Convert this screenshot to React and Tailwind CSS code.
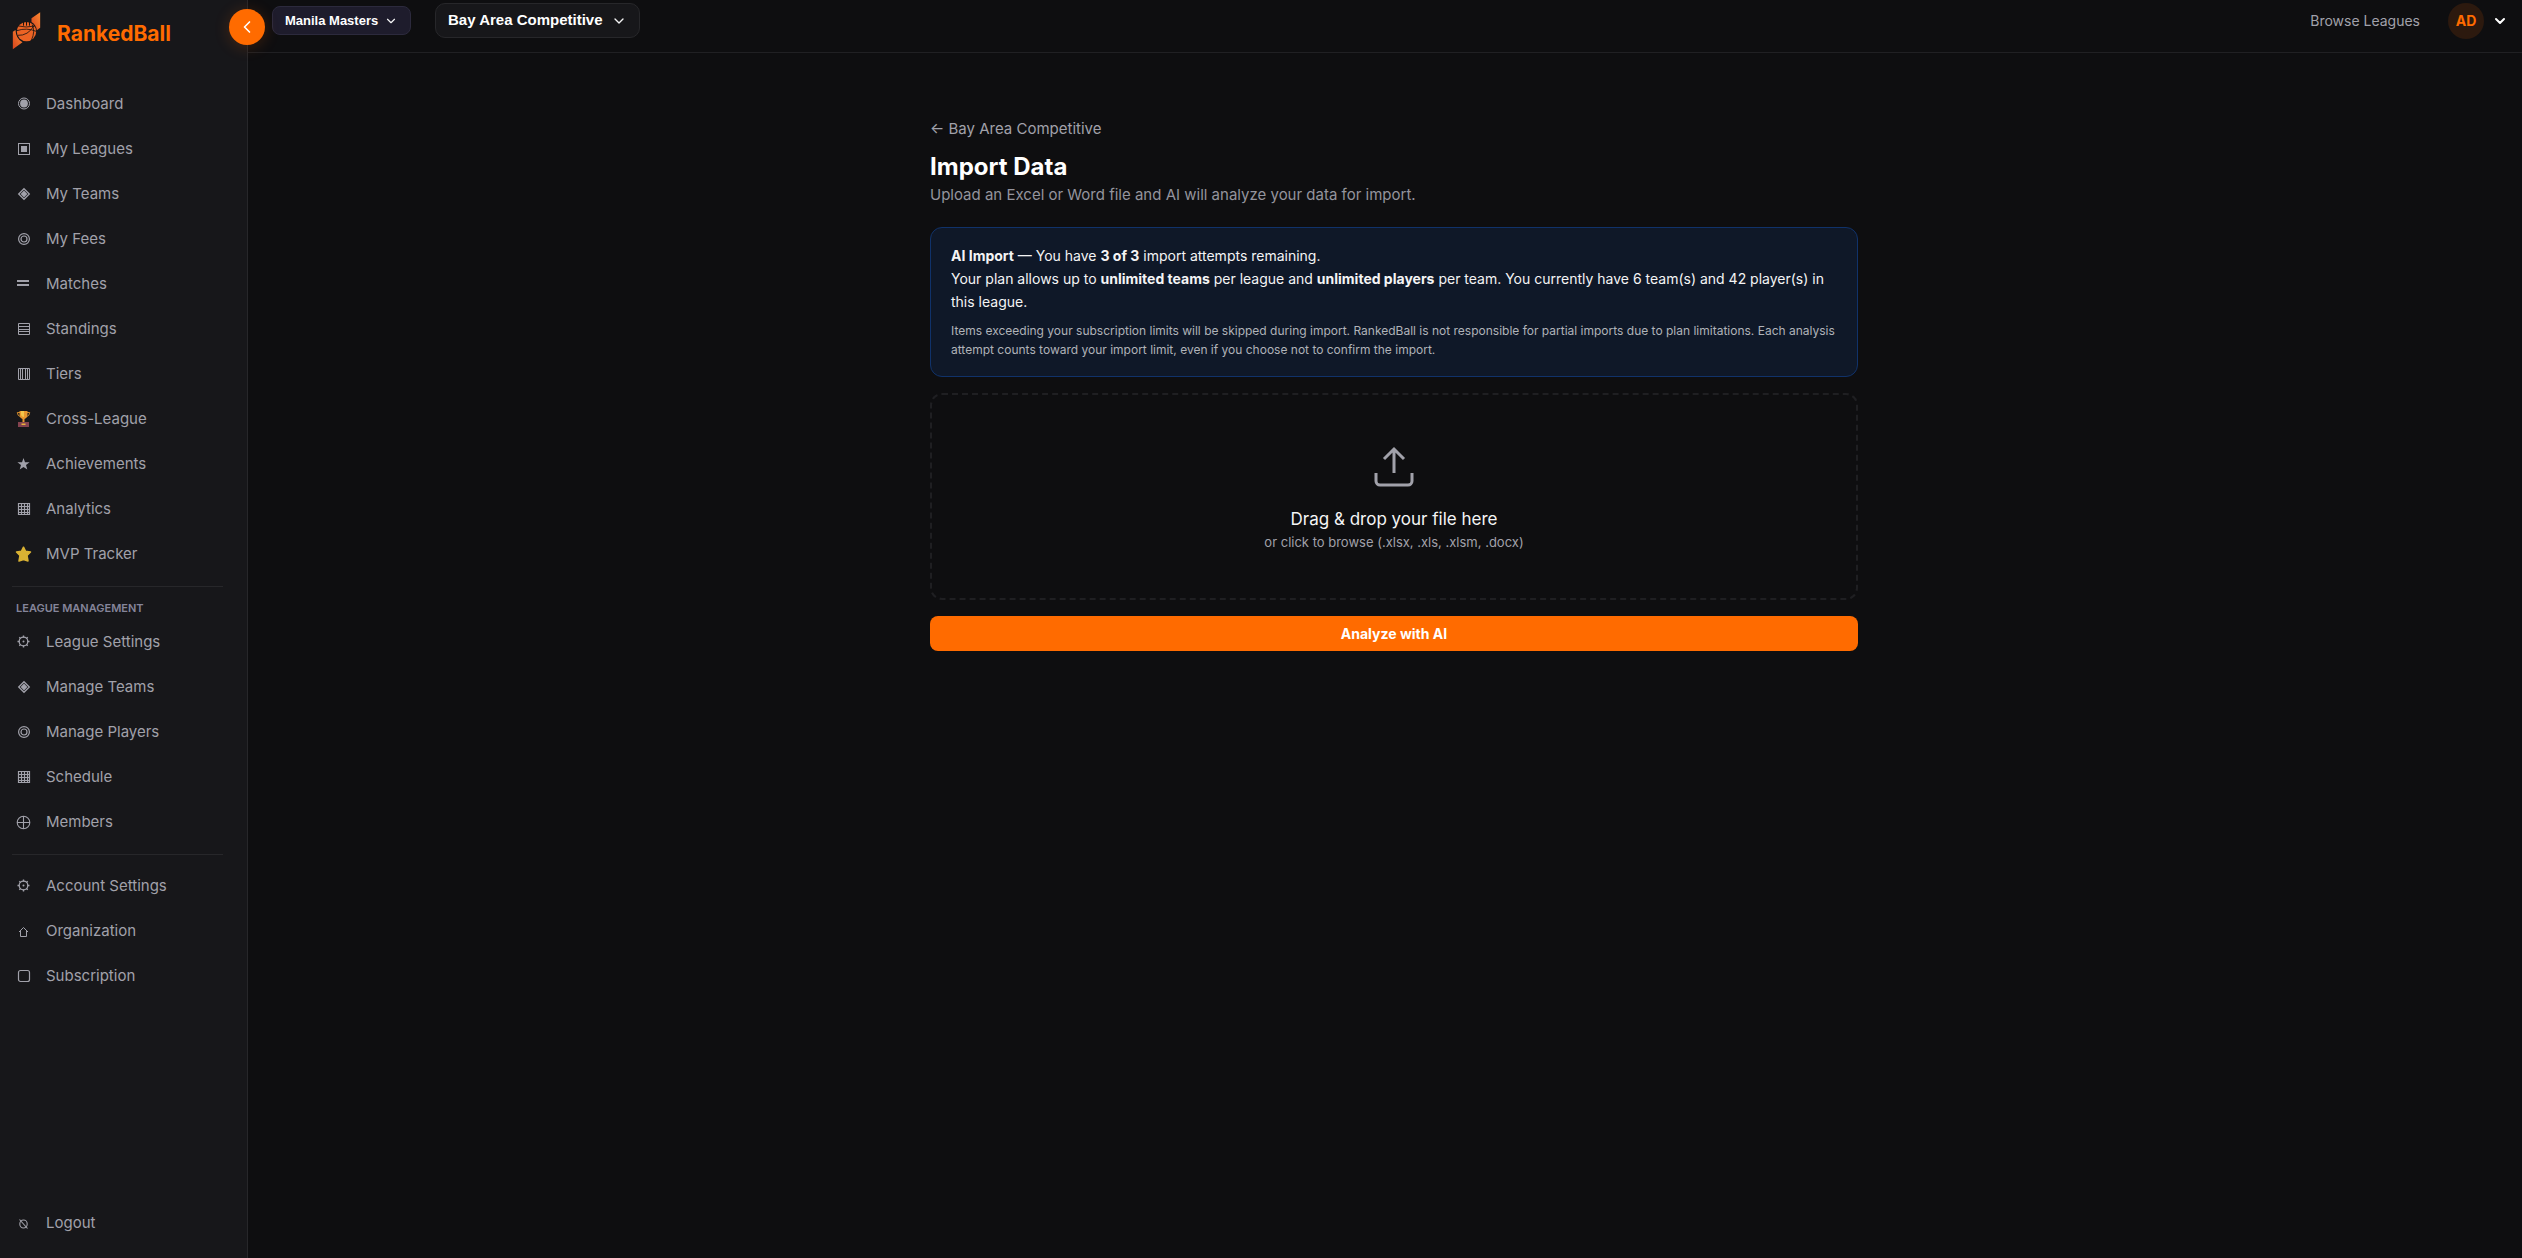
import { useState } from "react";
import { ChevronDown, ChevronLeft } from "lucide-react";
import clsx from "clsx";

// Sidebar glyphs, all drawn on a 16px wide grid
const glyphs = {
  fisheye: (
    <>
      <circle cx="8" cy="7.5" r="5.5" fill="none" stroke="currentColor" />
      <circle cx="8" cy="7.5" r="3.9" />
    </>
  ),
  square: (
    <>
      <rect x="2.5" y="2.5" width="11" height="11" fill="none" stroke="currentColor" />
      <rect x="5" y="5" width="6" height="6" />
    </>
  ),
  diamond: (
    <>
      <path d="M8 2.7 13.3 8 8 13.3 2.7 8Z" fill="none" stroke="currentColor" strokeWidth="1.3" />
      <path d="M8 4.6 11.4 8 8 11.4 4.6 8Z" />
    </>
  ),
  rings: (
    <g fill="none" stroke="currentColor" strokeWidth="1.2">
      <circle cx="8" cy="8" r="5.4" />
      <circle cx="8" cy="8" r="3" />
    </g>
  ),
  equals: <path d="M1 4h12v2H1zM1 8h12v2H1z" />,
  rows: (
    <path
      d="M2.5 2.5h11v11h-11zM2.5 5.5h11M2.5 8.5h11M2.5 10.5h11"
      fill="none"
      stroke="currentColor"
    />
  ),
  columns: (
    <path
      d="M2.5 2.5h11v11h-11zM4.5 2.5v11M6.5 2.5v11M9.5 2.5v11M11.5 2.5v11"
      fill="none"
      stroke="currentColor"
    />
  ),
  grid: (
    <path
      d="M2.5 2.5h11v11h-11zM5.5 2.5v11M8.5 2.5v11M11.5 2.5v11M2.5 5.5h11M2.5 8.5h11M2.5 11.5h11"
      fill="none"
      stroke="currentColor"
      strokeWidth="1.2"
    />
  ),
  trophy: (
    <>
      <path d="M4 1.5H1.3Q1.3 5 5 6M11 1.5h2.7Q13.7 5 10 6" fill="none" stroke="#d08a2c" />
      <path d="M3.5 0h8v3q0 4-3 5v3h-2V8q-3-1-3-5z" fill="#e8962e" />
      <path d="M5 0h3v6Q5 5.500 5 3z" fill="#f3c64b" />
      <path d="M2 11h11v5H2z" fill="#84434f" />
      <path d="M5.5 12.500h4v1.500h-4z" fill="#e8b23c" />
    </>
  ),
  star: <path d="M7.5 2 9 6.3h4.600L10 9.100 11.300 13.500 7.500 10.900 3.700 13.500 5 9.100 1.400 6.300H6z" />,
  goldStar: (
    <path
      d="M7.5 1.2 9.600 5.300 14.500 6 11 9.500 12 15 7.500 13.500 3 15 4 9.500 0.500 6 5.400 5.300z"
      fill="#d9b233"
      stroke="#d9b233"
      strokeWidth="1.5"
      strokeLinejoin="round"
    />
  ),
  gear: (
    <>
      <circle cx="7.5" cy="7.5" r="4.300" fill="none" stroke="currentColor" strokeWidth="1.2" />
      <path
        d="M7.5 1.5v2M7.5 11.500v2M1.500 7.500h2M11.500 7.500h2M3.300 3.300l1.200 1.200M10.500 10.500l1.200 1.200M11.700 3.300l-1.200 1.200M4.500 10.500l-1.200 1.200"
        fill="none"
        stroke="currentColor"
        strokeWidth="1.4"
      />
      <circle cx="7.5" cy="7.5" r="1" />
    </>
  ),
  crossCircle: (
    <g fill="none" stroke="currentColor" strokeWidth="1.1">
      <circle cx="7.5" cy="8.5" r="6.3" />
      <path d="M7.5 2v13M1 8.500h13" />
    </g>
  ),
  house: <path d="M3 9 7.5 4.500 12 9M4.500 8v5.500h6V8" fill="none" stroke="currentColor" />,
  roundedSquare: (
    <rect x="2.5" y="2.5" width="11" height="11" rx="2" fill="none" stroke="currentColor" strokeWidth="1.2" />
  ),
  slashCircle: (
    <g fill="none" stroke="currentColor" strokeWidth="1.1">
      <ellipse cx="7.5" cy="9" rx="3.7" ry="4" />
      <path d="M3.5 4.500 11.500 13.500" />
    </g>
  ),
};

const mainLinks = [
  { label: "Dashboard", icon: "fisheye" },
  { label: "My Leagues", icon: "square" },
  { label: "My Teams", icon: "diamond" },
  { label: "My Fees", icon: "rings" },
  { label: "Matches", icon: "equals" },
  { label: "Standings", icon: "rows" },
  { label: "Tiers", icon: "columns" },
  { label: "Cross-League", icon: "trophy" },
  { label: "Achievements", icon: "star" },
  { label: "Analytics", icon: "grid" },
  { label: "MVP Tracker", icon: "goldStar" },
];

const leagueLinks = [
  { label: "League Settings", icon: "gear" },
  { label: "Manage Teams", icon: "diamond" },
  { label: "Manage Players", icon: "rings" },
  { label: "Schedule", icon: "grid" },
  { label: "Members", icon: "crossCircle" },
];

const accountLinks = [
  { label: "Account Settings", icon: "gear" },
  { label: "Organization", icon: "house" },
  { label: "Subscription", icon: "roundedSquare" },
];

function Logo() {
  return (
    <svg viewBox="36 38 86 114" className="w-[29px] h-[38px] shrink-0" aria-hidden="true">
      <defs>
        <linearGradient id="flame" x1="1" y1="0" x2="0" y2="1">
          <stop offset="0" stopColor="#f98a33" />
          <stop offset="1" stopColor="#d8431c" />
        </linearGradient>
      </defs>
      <path d="M94 57 120 39V85L110 93Q108 76 94 68Z" fill="url(#flame)" />
      <path d="M38 97 46 92Q47 118 67 129L38 150Z" fill="url(#flame)" />
      <circle cx="79" cy="97" r="29" fill="#ec6324" />
      <g fill="none" stroke="#1c1412" strokeWidth="2.5">
        <path d="M50 94Q80 84 108 96M52 108Q84 110 102 78M96 76Q106 96 94 122" />
        <path d="M55 80Q76 86 104 80" />
        <path d="M70 66v13M79 66v13M88 66v13" strokeWidth="3" />
      </g>
    </svg>
  );
}

function NavItem({ label, icon }) {
  return (
    <li>
      <a href="#" className="flex items-center gap-[14px] h-[45px] pl-1 rounded-lg hover:bg-white/5">
        <svg viewBox="0 1 16 16" className="w-4 h-4 shrink-0 overflow-visible" fill="currentColor" aria-hidden="true">
          {glyphs[icon]}
        </svg>
        {label}
      </a>
    </li>
  );
}

function NavGroup({ links }) {
  return (
    <ul>
      {links.map((link) => (
        <NavItem key={link.label} {...link} />
      ))}
    </ul>
  );
}

function Sidebar({ onToggle }) {
  return (
    <aside className="sticky top-0 z-10 flex flex-col w-[248px] h-screen shrink-0 bg-[#17171a] border-r border-[#27272a] text-[15px] text-[#a1a1aa]">
      <a href="#" className="flex items-end gap-4 pl-3 pt-3 text-[21px] leading-8 font-bold text-[#ff6b00]">
        <Logo />
        RankedBall
      </a>

      <button
        type="button"
        aria-label="Collapse sidebar"
        onClick={onToggle}
        className="absolute top-[9px] -right-[18px] grid place-items-center w-9 h-9 rounded-full bg-[#ff6b00] text-white shadow-[0_2px_16px_rgba(255,107,0,0.2)]"
      >
        <ChevronLeft size={20} />
      </button>

      <nav className="flex flex-col flex-1 mt-8 pl-3 pr-6 pb-3">
        <NavGroup links={mainLinks} />
        <hr className="mt-[9px] border-[#27272a]" />
        <h2 className="mt-[13px] mb-1 pl-1 text-[11px] leading-4 font-semibold text-[#85859a]">
          LEAGUE MANAGEMENT
        </h2>
        <NavGroup links={leagueLinks} />
        <hr className="my-[9px] border-[#27272a]" />
        <NavGroup links={accountLinks} />
        <ul className="mt-auto">
          <NavItem label="Logout" icon="slashCircle" />
        </ul>
      </nav>
    </aside>
  );
}

function Switcher({ label, value, className, chevronSize }) {
  return (
    <div className="relative">
      <select
        aria-label={label}
        className={clsx(
          "appearance-none border font-['Liberation_Sans',Arial,sans-serif] font-bold text-white",
          className
        )}
      >
        <option>{value}</option>
      </select>
      <ChevronDown
        size={chevronSize}
        className="absolute top-1/2 right-[13px] -translate-y-1/2 pointer-events-none text-[#f4f4f5]"
      />
    </div>
  );
}

function Header() {
  return (
    <header className="flex items-center h-[53px] pl-6 pr-[14px] pb-[11px] border-b border-[#202023]">
      <Switcher
        label="Organization"
        value="Manila Masters"
        className="h-[29px] pl-3 pr-[31px] rounded-lg bg-[#1e1c2c] border-[#2c2a3d] text-[13px]"
        chevronSize={14}
      />
      <div className="ml-6">
        <Switcher
          label="League"
          value="Bay Area Competitive"
          className="h-[35px] pl-3 pr-[35px] rounded-[10px] bg-[#17171a] border-[#27272a] text-[15px]"
          chevronSize={16}
        />
      </div>
      <a href="#" className="ml-auto text-[14px] text-[#a1a1aa]">
        Browse Leagues
      </a>
      <button type="button" aria-label="Account menu" className="flex items-center gap-2 ml-7 text-white">
        <span className="grid place-items-center w-9 h-9 rounded-full bg-[#2c190e] text-[14px] font-bold text-[#ff6b00]">
          AD
        </span>
        <ChevronDown size={16} strokeWidth={3} />
      </button>
    </header>
  );
}

function DropZone({ file, onFile }) {
  return (
    <label
      htmlFor="import-file"
      className="flex flex-col items-center mt-4 pt-12 pb-[46px] border-2 border-dashed border-[#1f1f22] rounded-xl cursor-pointer"
    >
      <svg
        viewBox="0 0 24 24"
        className="w-12 h-12 mb-4"
        fill="none"
        stroke="#a1a1aa"
        strokeWidth="1.5"
        aria-hidden="true"
      >
        <path d="M21 15v4a2 2 0 0 1-2 2H5a2 2 0 0 1-2-2v-4" />
        <path d="M17 8 12 3 7 8M12 3v12" />
      </svg>
      <span className="text-[17px] leading-[25px] text-[#f4f4f5]">{file ? file.name : "Drag & drop your file here"}</span>
      <span className="text-[13px] leading-5 text-[#a1a1aa]">or click to browse (.xlsx, .xls, .xlsm, .docx)</span>
      <input
        id="import-file"
        type="file"
        accept=".xlsx,.xls,.xlsm,.docx"
        className="sr-only"
        onChange={(e) => onFile(e.target.files[0])}
      />
    </label>
  );
}

function App() {
  const [sidebarOpen, setSidebarOpen] = useState(true);
  const [file, setFile] = useState(null);

  return (
    <div className="flex min-h-screen bg-[#0e0e10] font-['Inter',sans-serif]">
      {sidebarOpen && <Sidebar onToggle={() => setSidebarOpen(false)} />}

      <div className="flex-1 min-w-0">
        <Header />

        <main className="pl-[18px] pt-16">
          <div className="max-w-[928px] mx-auto">
            <a href="#" className="block w-fit mb-[10px] text-[15px] leading-6 text-[#a1a1aa]">
              ← Bay Area Competitive
            </a>
            <h1 className="text-[24px] leading-8 font-bold text-white">Import Data</h1>
            <p className="mb-5 text-[15px] leading-6 text-[#94949d]">
              Upload an Excel or Word file and AI will analyze your data for import.
            </p>

            {/* Plan limits */}
            <section className="px-5 pt-4 pb-[17px] bg-[#0f1828] border border-[#10326a] rounded-xl text-[14px] leading-[23px] text-[#f4f4f5]">
              <p>
                <strong>AI Import</strong> — You have <strong>3 of 3</strong> import attempts remaining.
              </p>
              <p>
                Your plan allows up to <strong>unlimited teams</strong> per league and{" "}
                <strong>unlimited players</strong> per team. You currently have 6 team(s) and 42 player(s) in this
                league.
              </p>
              <p className="mt-2 text-[12px] leading-[19px] text-[#b0b3b9]">
                Items exceeding your subscription limits will be skipped during import. RankedBall is not responsible
                for partial imports due to plan limitations. Each analysis attempt counts toward your import limit,
                even if you choose not to confirm the import.
              </p>
            </section>

            <DropZone file={file} onFile={setFile} />

            <button
              type="button"
              className="w-full h-[35px] mt-4 rounded-lg bg-[#ff6b00] text-[14px] font-bold text-white hover:bg-[#e66000]"
            >
              Analyze with AI
            </button>
          </div>
        </main>
      </div>
    </div>
  );
}

export default App;
